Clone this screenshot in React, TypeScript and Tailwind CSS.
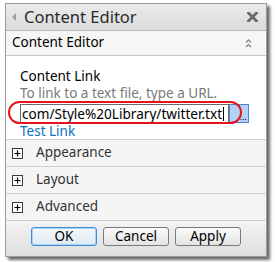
export default function App() {
  const font = { fontFamily: '"Noto Sans", "DejaVu Sans", sans-serif' };
  return (
    <div className="w-[275px] h-[262px] bg-white pl-[5px] pt-[3px]" style={font}>
      <div className="relative w-[262px] h-[254px] border border-[#9a9a9a] shadow-[3px_3px_3px_rgba(0,0,0,0.6)] flex flex-col bg-white">
        {/* Title bar */}
        <div className="h-[27px] shrink-0 border-b border-[#b8b8b8] bg-gradient-to-b from-[#ebebeb] to-[#dbdbdb] flex items-center">
          <svg width="4" height="8" viewBox="0 0 4 8" className="ml-[6px]">
            <polygon points="4,0 4,8 0,4" fill="#a0a0a0" />
          </svg>
          <span className="ml-[8px] text-[16.5px] leading-none text-[#2b2b2b]">Content Editor</span>
          <svg width="11" height="10" viewBox="0 0 11 10" className="ml-auto mr-[8px]">
            <path d="M1.5 1 L9.5 9 M9.5 1 L1.5 9" stroke="#6a6a6a" strokeWidth="2.8" strokeLinecap="square" />
          </svg>
        </div>
        {/* Section header */}
        <div className="h-[25px] shrink-0 border-b border-[#c8c8c8] bg-[#f6f6f6] flex items-center">
          <span className="ml-[6px] text-[13.5px] leading-none text-black">Content Editor</span>
          <svg width="7" height="11" viewBox="0 0 7 11" className="ml-auto mr-[14px]">
            <path d="M1 4.5 L3.5 2 L6 4.5 M1 9 L3.5 6.5 L6 9" stroke="#8a8a8a" strokeWidth="1.4" fill="none" />
          </svg>
        </div>
        {/* Content */}
        <div className="h-[84px] shrink-0 border-b border-[#cfcfcf] bg-white pl-[14px] pt-[12px] flex flex-col">
          <div className="h-[17px] text-[13.5px] leading-[17px] text-black">Content Link</div>
          <div className="h-[17px] text-[13.5px] leading-[17px] text-[#7a7a7a]">To link to a text file, type a URL.</div>
          <div className="flex h-[19px] mt-[2px]">
            <div className="w-[209px] h-[19px] border border-[#6b6b6b] bg-white flex items-center pl-[1px] overflow-hidden">
              <span className="text-[13.6px] leading-none text-black whitespace-nowrap">com/Style%20Library/twitter.txt</span>
              <span className="w-px h-[14px] bg-black ml-px" />
            </div>
            <div className="w-[20px] h-[19px] border border-[#4a86c5] bg-[#b5d1f5] flex items-end justify-end pr-[1px]">
              <span className="text-[9px] leading-[10px] text-black">...</span>
            </div>
          </div>
          <div className="h-[17px] text-[13.5px] leading-[17px] text-[#0b6fc2]">Test Link</div>
        </div>
        {/* Rows */}
        {["Appearance", "Layout", "Advanced"].map((label) => (
          <div key={label} className="h-[27px] shrink-0 border-b border-[#cfcfcf] bg-[#f5f5f5] flex items-center">
            <div className="ml-[6px] w-[11px] h-[11px] border border-[#3a3a3a] bg-white flex items-center justify-center">
              <svg width="7" height="7" viewBox="0 0 7 7">
                <path d="M3.5 0.5 V6.5 M0.5 3.5 H6.5" stroke="#000" strokeWidth="1.2" />
              </svg>
            </div>
            <span className="ml-[13px] text-[13.5px] leading-none text-[#333]">{label}</span>
          </div>
        ))}
        {/* Buttons */}
        <div className="flex-1 bg-gradient-to-b from-[#f3f3f3] to-[#dedede] flex justify-center gap-[6px] pt-[6px]">
          <button className="w-[66px] h-[19px] rounded-[3px] border border-[#3d8ee0] bg-gradient-to-b from-[#f6f9fd] to-[#dfe9f3] text-[13.5px] leading-none text-black shadow-[inset_0_0_0_1px_#a9d3f7]">OK</button>
          <button className="w-[66px] h-[19px] rounded-[3px] border border-[#7a7a7a] bg-gradient-to-b from-[#fafafa] to-[#e3e3e3] text-[13.5px] leading-none text-black">Cancel</button>
          <button className="w-[66px] h-[19px] rounded-[3px] border border-[#7a7a7a] bg-gradient-to-b from-[#fafafa] to-[#e3e3e3] text-[13.5px] leading-none text-black">Apply</button>
        </div>
        {/* Red annotation ellipse */}
        <div className="absolute left-[2px] top-[97px] w-[234px] h-[23px] rounded-full border-2 border-[#e3141c]" />
      </div>
    </div>
  );
}
